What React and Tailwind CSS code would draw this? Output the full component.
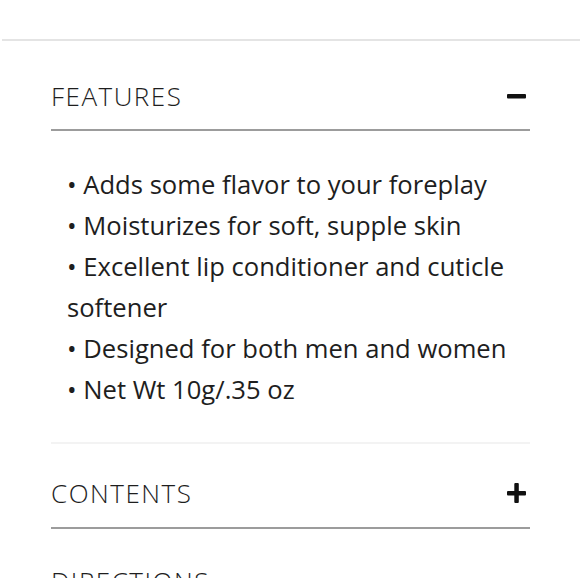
import React, { useState } from 'react';

const MinusIcon = () => (
  <svg width="20" height="20" viewBox="0 0 20 20" className="block">
    <rect x="0" y="8" width="19" height="4.5" rx="1" fill="#111" />
  </svg>
);

const PlusIcon = () => (
  <svg width="20" height="20" viewBox="0 0 20 20" className="block">
    <rect x="0" y="8" width="19" height="4.5" rx="1" fill="#111" />
    <rect x="7.3" y="0" width="4.5" height="20" rx="1" fill="#111" />
  </svg>
);

const features = [
  'Adds some flavor to your foreplay',
  'Moisturizes for soft, supple skin',
  'Excellent lip conditioner and cuticle softener',
  'Designed for both men and women',
  'Net Wt 10g/.35 oz',
];

const App = () => {
  const [open, setOpen] = useState('features');

  return (
    <div
      className="w-[580px] h-[578px] overflow-hidden bg-white text-[#1e1e1e]"
      style={{ fontFamily: '"Open Sans", "Noto Sans", sans-serif' }}
    >
      <div className="h-[39px]" />
      <div className="ml-[2px] border-t-2 border-[#e4e4e4]">
        <div className="ml-[49px] mr-[50px]">
          {/* features */}
          <button
            onClick={() => setOpen(open === 'features' ? '' : 'features')}
            className="w-full flex items-center justify-between pt-[37px] pb-[15px] border-b-2 border-[#9c9c9c] text-left"
          >
            <span className="text-[26px] leading-[36px] font-light tracking-[1.5px]">FEATURES</span>
            <span className="mr-[3px]">{open === 'features' ? <MinusIcon /> : <PlusIcon />}</span>
          </button>
          <div className="pt-[33px] pb-[32px] pl-[16px] pr-[14px] border-b-2 border-[#f3f3f3]">
            {features.map((f) => (
              <p key={f} className="text-[25.6px] leading-[41px]">
                • {f}
              </p>
            ))}
          </div>

          {/* contents */}
          <button
            onClick={() => setOpen(open === 'contents' ? '' : 'contents')}
            className="w-full flex items-center justify-between pt-[31px] pb-[16px] border-b-2 border-[#9c9c9c] text-left"
          >
            <span className="text-[26px] leading-[36px] font-light tracking-[1.5px]">CONTENTS</span>
            <span className="mr-[3px]">{open === 'contents' ? <MinusIcon /> : <PlusIcon />}</span>
          </button>

          {/* directions */}
          <button className="w-full flex items-start justify-between pt-[34px] pb-[16px] text-left">
            <span className="text-[26px] leading-[36px] font-light tracking-[1.5px]">DIRECTIONS</span>
          </button>
        </div>
      </div>
    </div>
  );
};

export default App;
